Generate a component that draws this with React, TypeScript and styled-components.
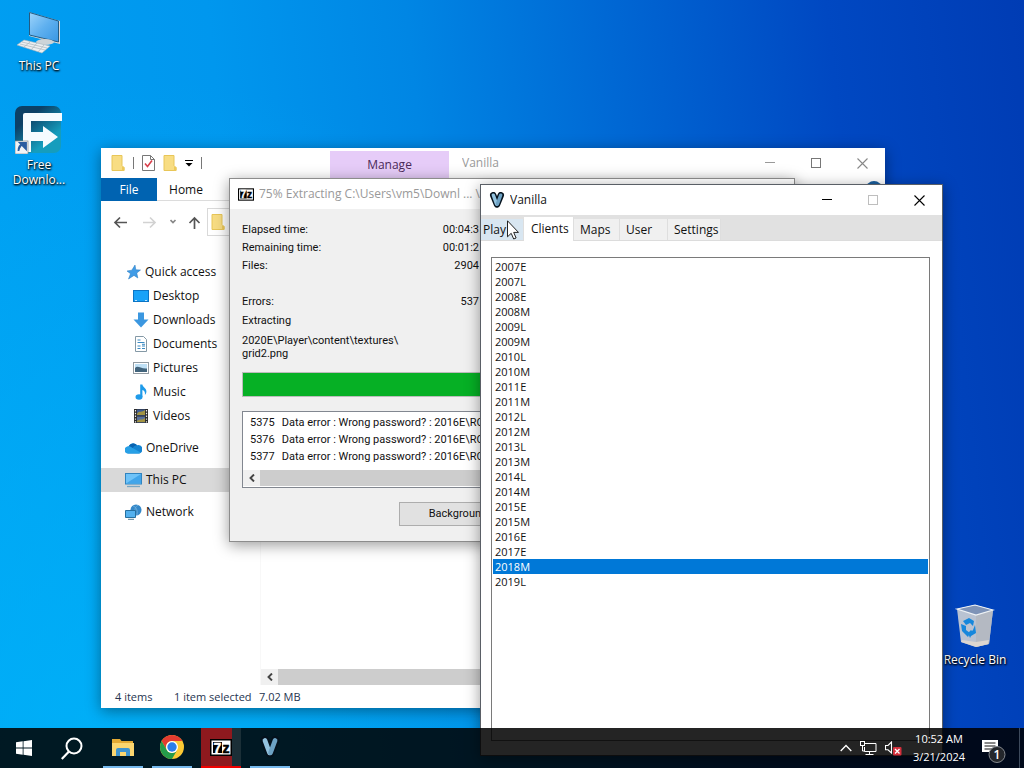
import React, { useState } from "react";
import styled, { createGlobalStyle, css } from "styled-components";

const uiFont = `"Open Sans", "Noto Sans", sans-serif`;
const dialogFont = `Roboto, "Liberation Sans", sans-serif`;

const GlobalStyle = createGlobalStyle`
  *, *::before, *::after { box-sizing: border-box; }
  body {
    margin: 0;
    overflow: hidden;
    font: 12px/16px ${uiFont};
    color: #111;
    cursor: default;
  }
  button { font: inherit; color: inherit; border: 0; padding: 0; margin: 0; background: none; }
  ul, dl, dd { margin: 0; padding: 0; list-style: none; }
  svg { display: block; flex: none; }
`;

const Desktop = styled.main`
  position: relative;
  min-height: 100vh;
  overflow: hidden;
  background:
    radial-gradient(ellipse 62% 90% at 12% 100%, rgba(0, 182, 250, 0.75), rgba(0, 170, 245, 0) 100%),
    linear-gradient(84deg, #00a0f2 0%, #0097ee 26%, #0086e4 44%, #0068d4 62%, #0048c2 82%, #003cb4 100%);
`;

/* Desktop shortcuts */

const Shortcut = styled.button<{ $x: number; $y: number }>`
  position: absolute;
  left: ${(p) => p.$x}px;
  top: ${(p) => p.$y}px;
  width: 76px;
  display: flex;
  flex-direction: column;
  align-items: center;
  gap: 3px;
  color: #fff;
  line-height: 15px;
  text-shadow: 0 1px 2px #000, 1px 1px 2px #000;
`;

/* Windows */

const WindowFrame = styled.section<{ $x: number; $y: number; $w: number; $h: number; $edge?: string }>`
  position: absolute;
  left: ${(p) => p.$x}px;
  top: ${(p) => p.$y}px;
  width: ${(p) => p.$w}px;
  height: ${(p) => p.$h}px;
  display: flex;
  flex-direction: column;
  background: #fff;
  border: ${(p) => (p.$edge ? `1px solid ${p.$edge}` : "0")};
  box-shadow: 0 3px 14px rgba(0, 0, 0, 0.4);
`;

const TitleBar = styled.header<{ $inactive?: boolean }>`
  flex: none;
  display: flex;
  align-items: center;
  height: 30px;
  color: ${(p) => (p.$inactive ? "#999" : "#111")};
`;

const TitleText = styled.h1`
  margin: 0;
  flex: 1;
  font-size: inherit;
  font-weight: 400;
  white-space: nowrap;
  overflow: hidden;
`;

const Caption = styled.button<{ $dim?: boolean }>`
  width: 46px;
  height: 28px;
  display: grid;
  place-items: center;
  opacity: ${(p) => (p.$dim ? 0.25 : 1)};
`;

const CaptionGroup = styled.div`
  display: flex;
`;

/* Explorer */

const QuickTools = styled.div`
  width: 229px;
  height: 100%;
  padding-left: 10px;
  display: flex;
  align-items: center;
  gap: 8px;
`;

const Divider = styled.span`
  width: 1px;
  height: 12px;
  background: #777;
`;

const ContextTab = styled.button`
  align-self: flex-end;
  width: 119px;
  height: 27px;
  margin-right: 13px;
  background: #e6ccf8;
  color: #4a2a58;
`;

const Ribbon = styled.nav`
  flex: none;
  display: flex;
  height: 23px;
  padding-right: 3px;
  border-bottom: 1px solid #dcdcdc;
`;

const RibbonTab = styled.button<{ $file?: boolean }>`
  width: ${(p) => (p.$file ? 56 : 58)}px;
  height: 23px;
  ${(p) => p.$file && css`background: #0063b1; color: #fff;`}
`;

const HelpButton = styled.button`
  width: 16px;
  height: 16px;
  margin: 3px 0 0 auto;
  border-radius: 50%;
  background: #1a5f9e;
  color: #fff;
`;

const AddressRow = styled.div`
  flex: none;
  display: flex;
  align-items: center;
  height: 42px;
  padding-left: 12px;
`;

const NavButton = styled.button<{ $w: number }>`
  width: ${(p) => p.$w}px;
  height: 24px;
  display: flex;
  align-items: center;
`;

const AddressBox = styled.div`
  flex: 1;
  height: 28px;
  margin: 0 12px 0 0;
  padding-left: 3px;
  display: flex;
  align-items: center;
  border: 1px solid #d9d9d9;
`;

const ExplorerBody = styled.div`
  flex: 1;
  display: flex;
  min-height: 0;
`;

const Sidebar = styled.ul`
  width: 160px;
  padding-top: 17px;
  border-right: 1px solid #f8f8f8;
`;

const SideItem = styled.li<{ $child?: boolean; $gap?: boolean; $current?: boolean }>`
  margin-top: ${(p) => (p.$gap ? 8 : 0)}px;
  background: ${(p) => (p.$current ? "#d9d9d9" : "transparent")};
  button {
    height: 24px;
    width: 100%;
    padding-left: ${(p) => (p.$child ? 32 : 24)}px;
    display: flex;
    align-items: center;
    gap: 4px;
  }
`;

const FilePane = styled.div`
  flex: 1;
  display: flex;
  flex-direction: column;
  justify-content: flex-end;
`;

const ScrollTrack = styled.div`
  display: flex;
  height: 16px;
  background: #f0f0f0;
`;

const ScrollArrow = styled.button`
  width: 17px;
  display: grid;
  place-items: center;
`;

const ScrollThumb = styled.span`
  flex: 1;
  background: #cdcdcd;
`;

const StatusBar = styled.footer`
  flex: none;
  display: flex;
  align-items: center;
  height: 23px;
  padding-left: 14px;
  font-size: 11px;
  color: #26344f;
`;

const StatusCell = styled.span<{ $w?: number }>`
  width: ${(p) => (p.$w ? `${p.$w}px` : "auto")};
  white-space: nowrap;
`;

/* Extraction dialog */

const DialogTitle = styled(TitleBar)`
  padding-left: 8px;
  gap: 5px;
`;

const DialogBody = styled.div`
  flex: 1;
  padding: 12px 12px 0;
  background: #f0f0f0;
  font: 11px/18px ${dialogFont};
  color: #111;
`;

const Stats = styled.dl`
  width: 237px;
  div {
    display: flex;
    justify-content: space-between;
    height: 18px;
  }
  div:last-child { margin-top: 18px; }
`;

const CurrentFile = styled.p`
  margin: 4px 0 12px;
  line-height: 13px;
`;

const Stage = styled.p`
  margin: 1px 0 0;
`;

const Progress = styled.div`
  height: 25px;
  border: 1px solid #bcbcbc;
  background: #e6e6e6;
`;

const ProgressFill = styled.div`
  height: 100%;
  background: #06b025;
`;

const ErrorBox = styled.div`
  margin-top: 14px;
  padding-bottom: 1px;
  border: 1px solid #828790;
  background: #fff;
`;

const ErrorTable = styled.table`
  margin: 2px 0 5px 7px;
  border-collapse: collapse;
  line-height: 17px;
  td { padding: 0 7px 0 0; height: 17px; white-space: nowrap; }
`;

const PushButton = styled.button`
  width: 118px;
  height: 24px;
  margin: 14px 0 0 157px;
  background: #e1e1e1;
  border: 1px solid #adadad;
`;

/* Vanilla launcher */

const TabStrip = styled.div`
  flex: none;
  display: flex;
  align-items: flex-end;
  height: 26px;
  background: #e1e1e1;
  border-bottom: 1px solid #dcdcdc;
`;

const Tab = styled.button<{ $w: number; $state?: "hot" | "active" }>`
  width: ${(p) => p.$w}px;
  height: 21px;
  padding-left: 6px;
  text-align: left;
  background: #f0f0f0;
  border-right: 1px solid #dedede;
  ${(p) => p.$state === "hot" && css`padding-left: 2px; background: #d8e6f1;`}
  ${(p) =>
    p.$state === "active" &&
    css`height: 24px; margin-bottom: -1px; padding: 0 0 1px 7px; background: #fff;`}
`;

const LauncherBody = styled.div`
  flex: 1;
  display: flex;
  padding: 16px 12px 14px 10px;
`;

const ListBox = styled.ul`
  flex: 1;
  padding: 1px;
  border: 1px solid #7a7a7a;
  font-size: 11px;
  line-height: 15px;
`;

const Option = styled.li<{ $selected: boolean }>`
  padding-left: 2px;
  ${(p) => p.$selected && css`background: #0078d7; color: #fff;`}
`;

const Pointer = styled.svg`
  position: absolute;
  left: 507px;
  top: 220px;
  pointer-events: none;
`;

/* Taskbar */

const Taskbar = styled.footer`
  position: absolute;
  left: 0;
  right: 0;
  bottom: 0;
  height: 40px;
  display: flex;
  background: rgba(0, 0, 0, 0.86);
  color: #fff;
`;

const SystemButton = styled.button`
  width: 48px;
  display: grid;
  place-items: center;
`;

const Apps = styled.div`
  display: flex;
  gap: 9px;
  margin-left: 7px;
`;

const AppButton = styled.button<{ $alert?: boolean }>`
  width: 40px;
  display: grid;
  place-items: center;
  border-bottom: 2px solid ${(p) => (p.$alert ? "#f00000" : "#76b9ed")};
  ${(p) => p.$alert && css`background: linear-gradient(to right, #8e191e 31px, #1b2f37 31px);`}
`;

const Tray = styled.div`
  display: flex;
  align-items: center;
  margin-left: auto;
  gap: 8px;
`;

const TrayButton = styled.button`
  display: grid;
  place-items: center;
`;

const Clock = styled.time`
  width: 58px;
  text-align: center;
  font-size: 11px;
  line-height: 18px;
  white-space: nowrap;
`;

const NoticeButton = styled(TrayButton)`
  width: 35px;
`;

const ShowDesktop = styled.button`
  align-self: stretch;
  width: 5px;
  border-left: 1px solid #3d4a5c;
`;

/* Drawings */

const MinIcon = ({ c = "#000" }: { c?: string }) => (
  <svg width="10" height="10"><path d="M0 4.500H10" stroke={c} /></svg>
);
const MaxIcon = ({ c = "#000" }: { c?: string }) => (
  <svg width="10" height="10"><rect x=".5" y=".5" width="9" height="9" fill="none" stroke={c} /></svg>
);
const CloseIcon = ({ c = "#000" }: { c?: string }) => (
  <svg width="11" height="11"><path d="M.5.5l10 10M10.500.5l-10 10" stroke={c} strokeWidth="1.1" /></svg>
);
const Folder = () => (
  <svg width="14" height="16">
    <path d="M1 .5h10v10l2 2v3H1z" fill="#f8dd83" stroke="#e8c658" />
    <path d="M11 15.500v-4l2.500 1v3z" fill="#edc95a" />
  </svg>
);
const CheckPage = () => (
  <svg width="13" height="16">
    <path d="M.5.5h8l4 4v11H.5z" fill="#fff" stroke="#777" />
    <path d="M8.500.5v4h4" fill="none" stroke="#777" />
    <path d="M3 8.500l2.500 3L10 5.500" fill="none" stroke="#d8404c" strokeWidth="1.600" />
  </svg>
);
const SevenZip = ({ w = 16, h = 13 }: { w?: number; h?: number }) => (
  <svg width={w} height={h} viewBox="0 0 22 17">
    <rect width="22" height="17" fill="#000" />
    <rect x="1.500" y="1.500" width="19" height="14" fill="#fff" />
    <rect x="3" y="3" width="9" height="11" fill="#000" />
    <text x="3.500" y="13.500" fontFamily="Liberation Sans, sans-serif" fontWeight="700" fontSize="14" fill="#fff" stroke="#fff" strokeWidth=".4">7</text>
    <text x="12.500" y="14" fontFamily="Liberation Sans, sans-serif" fontWeight="700" fontSize="14" fill="#000" stroke="#000" strokeWidth=".6">z</text>
  </svg>
);
const VanillaLogo = ({ w = 16, h = 16 }: { w?: number; h?: number }) => (
  <svg width={w} height={h} viewBox="0 0 14 16">
    <path d="M3.200 3.200L7 12.500 10.800 3.200" fill="none" stroke="#04111c" strokeWidth="6.400" strokeLinejoin="round" strokeLinecap="round" />
    <path d="M3.300 3.200L6.600 12.200" fill="none" stroke="#93c3df" strokeWidth="3.400" strokeLinecap="round" />
    <path d="M10.700 3.200L7.400 12.200" fill="none" stroke="#6da2c4" strokeWidth="3.400" strokeLinecap="round" />
  </svg>
);
const Arrow = ({ d, w, c = "#555" }: { d: string; w: number; c?: string }) => (
  <svg width={w} height="13"><path d={d} fill="none" stroke={c} strokeWidth="1.700" /></svg>
);
const LeftChevron = () => (
  <svg width="6" height="8"><path d="M5 .5L1.500 4 5 7.500" fill="none" stroke="#444" strokeWidth="1.900" /></svg>
);

const StarIcon = () => (
  <svg width="16" height="16">
    <path d="M10 1l.8 4.800L15.500 6l-3.700 3 1 5-3.800-2.600L3.500 15l2-5.300L2 7l4.800-.8z" fill="#3f9be6" stroke="#2277bf" strokeWidth=".5" />
  </svg>
);
const ScreenIcon = () => (
  <svg width="16" height="16"><rect x=".5" y="2.500" width="15" height="11" fill="#18a2f8" stroke="#0b74c4" /><path d="M2 12.500h2M12 12.500h2" stroke="#bfe5ff" /></svg>
);
const DownIcon = () => (
  <svg width="16" height="16"><path d="M5 .5h6v7h4.500L8 15.500.5 7.500H5z" fill="#3b97e0" /></svg>
);
const DocIcon = () => (
  <svg width="16" height="16">
    <path d="M2.500.5h8l3 3v12h-11z" fill="#fff" stroke="#8499a6" />
    <path d="M4.500 4h3M4.500 6.500h7M4.500 10h3M9 10h3M4.500 12.500h3M9 12.500h3M9 8.300h3" stroke="#3b8ac2" />
  </svg>
);
const PictureIcon = () => (
  <svg width="16" height="16">
    <rect x=".5" y="2.500" width="15" height="11" fill="#fff" stroke="#929ba2" />
    <rect x="2" y="4" width="12" height="8" fill="#bfe0f5" />
    <path d="M2 8c3-3 5 1 12 .5V12H2z" fill="#42647c" />
  </svg>
);
const MusicIcon = () => (
  <svg width="16" height="16">
    <ellipse cx="6" cy="13" rx="3.500" ry="2.700" fill="#1e9bea" />
    <path d="M7.200.5h2.200c.3 3 4 3.500 4 7 0 1.500-.7 2.500-1.500 3.500.5-3-.8-4.500-2.500-5V13H7.200z" fill="#1e9bea" />
  </svg>
);
const VideoIcon = () => (
  <svg width="16" height="16">
    <rect x="1" y="1" width="14" height="14" fill="#2b2b2b" />
    <rect x="4" y="1.500" width="8" height="6" fill="#3c5a94" /><rect x="4" y="8.500" width="8" height="6" fill="#58709c" />
    <path d="M4 6c2-4 5-1 8-4v5H4zM4 13c3-3 5 0 8-3v4H4z" fill="#a29443" />
    <path d="M2.500 2v13M13.500 2v13" stroke="#eee" strokeWidth="1.200" strokeDasharray="1.400 1.400" />
  </svg>
);
const CloudIcon = () => (
  <svg width="17" height="16">
    <path d="M3.500 13.500a3.500 3.500 0 010-7 5 5 0 018.500-1.300 4 4 0 012.500 8.300z" fill="#1484d2" />
    <path d="M3.500 13.500a3.500 3.500 0 01-.4-7c1.500-.2 2.500.3 4 1.200l8.500 4.900-1.500.9z" fill="#28a0e6" />
    <path d="M4 5.800a5 5 0 018-.6c-2 0-3 1-4.200 2.800C6.500 7 5.500 6.300 4 5.800z" fill="#0a63b0" />
  </svg>
);
const PcIcon = () => (
  <svg width="17" height="16">
    <rect x=".5" y="1.500" width="16" height="10.500" fill="#6fc3f8" stroke="#3184bf" />
    <path d="M1 11.500L16 2v9.500z" fill="#41a5ea" /><path d="M2 14.500h13" stroke="#76a6c4" strokeWidth="1.300" />
  </svg>
);
const NetworkIcon = () => (
  <svg width="17" height="16">
    <circle cx="11" cy="6" r="5.500" fill="#3488c9" /><path d="M8 2c3 1 5 4 4 9M13 1c-3 2-4 5-2 9" fill="none" stroke="#7db8e0" strokeWidth=".7" />
    <path d="M.5 6.500h10v7H.5z" fill="#53b1ef" stroke="#266f9f" /><path d="M3 15.300h6" stroke="#548098" />
  </svg>
);

const BigPc = () => (
  <svg width="44" height="44">
    <defs><linearGradient id="screen" x2="1" y2="1"><stop stopColor="#9ed4fb" /><stop offset=".5" stopColor="#5fb0ef" /><stop offset="1" stopColor="#3897e4" /></linearGradient></defs>
    <path d="M12 1l31 9v23l-31-8z" fill="#d8dadb" /><path d="M12.500 1.500l29 8.500v21l-29-7z" fill="url(#screen)" stroke="#225b83" />
    <path d="M24 27l7 2v3l-7-2z" fill="#9ba6ad" /><ellipse cx="28" cy="31" rx="9" ry="3" fill="#cdd4d8" />
    <path d="M7 29l26 6-8 7L0 34z" fill="#eceff1" stroke="#aab4bb" strokeWidth=".6" />
    <path d="M5 31l25 6M3 33l25 6M13 31l-6 5M20 32l-6 7M27 34l-6 7" stroke="#aab4bb" strokeWidth=".7" />
  </svg>
);
const FdmLogo = () => (
  <svg width="48" height="48">
    <defs><linearGradient id="fdm" x2=".8" y2="1"><stop offset=".3" stopColor="#0c4066" /><stop offset=".8" stopColor="#159dbd" /></linearGradient></defs>
    <rect width="46" height="47" rx="7" fill="url(#fdm)" />
    <path d="M8 46V9q0-2 2-2h37v8H16v11h12v-6l15 11-15 11v-7H16v11z" fill="#f5fbff" />
    <rect x="0" y="35" width="13" height="13" fill="#f1f4f7" stroke="#888" strokeWidth=".7" />
    <path d="M3.500 45c0-4 1-6 4-6.500M5 37h6v6z" fill="#2b5c9f" stroke="#2b5c9f" strokeWidth="1.800" />
  </svg>
);
const BinIcon = () => (
  <svg width="40" height="46">
    <path d="M2 6l18-4 18 5-4 34-13 3L6 39z" fill="#c7ccd3" fillOpacity=".93" />
    <path d="M21 12l17-5-4 34-13 3z" fill="#b4b9c2" />
    <path d="M2 6l18-4 18 5-17 5z" fill="#7e93b7" stroke="#eef2f5" strokeWidth="1.200" />
    <path d="M7 37l14 2 13-2-1 4-12 3-15-5z" fill="#dcd6d0" />
    <g fill="#1687dc">
      <path d="M8 18l6-3 5 3-1 5-3-3-4 2z" /><path d="M6 21l5 2v4l4 3-2 4-6-6z" /><path d="M20 22l1 8-5 3-1 2-2-5 3-3 1 1 1-1z" />
    </g>
  </svg>
);

const WinLogo = () => (
  <svg width="16" height="16"><path d="M0 2.300L6.700 1.300V7.600H0zM7.500 1.200L16 0v7.600H7.500zM0 8.400h6.700v6.300L0 13.700zM7.500 8.400H16V16l-8.500-1.200z" fill="#fff" /></svg>
);
const SearchIcon = () => (
  <svg width="22" height="23"><circle cx="13" cy="9" r="7.500" fill="none" stroke="#fff" strokeWidth="2" /><path d="M8 14.500L.8 22" stroke="#fff" strokeWidth="2.200" /></svg>
);
const TaskFolder = () => (
  <svg width="22" height="19">
    <path d="M0 1h8l1.500 2H21v15H0z" fill="#e3aa34" /><path d="M0 5h22v13H0z" fill="#fbd66f" />
    <path d="M4 18v-6q0-2 2-2h10q2 0 2 2v6h-4v-4H8v4z" fill="#3f94cf" />
  </svg>
);
const ChromeLogo = () => (
  <svg width="24" height="24" viewBox="0 0 24 24">
    <circle cx="12" cy="12" r="12" fill="#fcc934" />
    <path d="M1.610 6A12 12 0 0122.390 6H12a6 6 0 00-5.200 9z" fill="#e23b30" />
    <path d="M1.610 6A12 12 0 0012 24l5.200-9A6 6 0 016.800 15z" fill="#249b4a" />
    <circle cx="12" cy="12" r="6" fill="#fff" /><circle cx="12" cy="12" r="4.700" fill="#2b7de9" />
  </svg>
);
const UpChevron = () => (
  <svg width="12" height="8"><path d="M.7 7L6 1.500 11.300 7" fill="none" stroke="#fff" strokeWidth="1.300" /></svg>
);
const TrayNetwork = () => (
  <svg width="17" height="14">
    <path d="M5 2.500h11v8H4.500V6M9.500 10.500v3M5.500 13.500h8" fill="none" stroke="#fff" />
    <rect x=".5" y=".5" width="4" height="4" fill="#222" stroke="#fff" /><path d="M2.500 4.500V10h2" fill="none" stroke="#fff" />
  </svg>
);
const TraySpeaker = () => (
  <svg width="17" height="15">
    <path d="M.5 4.500H3l3.500-3.500v11L3 8.800H.5z" fill="none" stroke="#fff" strokeWidth="1.100" />
    <rect x="8" y="6" width="8.500" height="8.500" rx="1" fill="#d42f3c" /><path d="M10 8l4.500 4.500M14.500 8L10 12.500" stroke="#fff" strokeWidth="1.300" />
  </svg>
);
const NoticeIcon = () => (
  <svg width="26" height="30">
    <path d="M1 7h16v12h-4v4l-4-4H1z" fill="#fff" /><path d="M3.500 10h11M3.500 13h11M3.500 16h8" stroke="#111" />
    <circle cx="16" cy="21.500" r="8" fill="#24272c" stroke="#85898f" />
    <text x="16" y="26" textAnchor="middle" fontSize="12" fontWeight="600" fontFamily="Open Sans, sans-serif" fill="#fff">1</text>
  </svg>
);

/* Data */

const places = [
  { label: "Quick access", icon: <StarIcon /> },
  { label: "Desktop", icon: <ScreenIcon />, child: true },
  { label: "Downloads", icon: <DownIcon />, child: true },
  { label: "Documents", icon: <DocIcon />, child: true },
  { label: "Pictures", icon: <PictureIcon />, child: true },
  { label: "Music", icon: <MusicIcon />, child: true },
  { label: "Videos", icon: <VideoIcon />, child: true },
  { label: "OneDrive", icon: <CloudIcon />, gap: true },
  { label: "This PC", icon: <PcIcon />, gap: true, current: true },
  { label: "Network", icon: <NetworkIcon />, gap: true },
];

const stats = [
  ["Elapsed time:", "00:04:3"],
  ["Remaining time:", "00:01:2"],
  ["Files:", "2904"],
  ["Errors:", "537"],
];

const clients = [
  "2007E", "2007L", "2008E", "2008M", "2009L", "2009M", "2010L", "2010M", "2011E", "2011M", "2012L",
  "2012M", "2013L", "2013M", "2014L", "2014M", "2015E", "2015M", "2016E", "2017E", "2018M", "2019L",
];

const Explorer = () => (
  <WindowFrame $x={101} $y={148} $w={784} $h={560} aria-label="Explorer">
    <TitleBar $inactive>
      <QuickTools>
        <Folder /><Divider /><CheckPage /><Folder />
        <svg width="8" height="8"><path d="M0 1.500h8" stroke="#000" /><path d="M.5 4h7L4 7.500z" /></svg>
        <Divider />
      </QuickTools>
      <ContextTab>Manage</ContextTab>
      <TitleText>Vanilla</TitleText>
      <Caption aria-label="Minimize"><MinIcon c="#999" /></Caption>
      <Caption aria-label="Maximize"><MaxIcon c="#777" /></Caption>
      <Caption aria-label="Close"><CloseIcon c="#888" /></Caption>
    </TitleBar>
    <Ribbon>
      <RibbonTab $file>File</RibbonTab>
      <RibbonTab>Home</RibbonTab>
      <HelpButton aria-label="Help" />
    </Ribbon>
    <AddressRow>
      <NavButton $w={30} aria-label="Back"><Arrow w={14} d="M14 6.500H2M7 1.500l-5 5 5 5" /></NavButton>
      <NavButton $w={27} aria-label="Forward"><Arrow w={14} c="#d2d2d2" d="M0 6.500h12M7 1.500l5 5-5 5" /></NavButton>
      <NavButton $w={18} aria-label="Recent"><Arrow w={7} c="#888" d="M.5 4l2.500 2.500L5.500 4" /></NavButton>
      <NavButton $w={19} aria-label="Up"><Arrow w={13} d="M6.500 13V2M1.500 7l5-5 5 5" /></NavButton>
      <AddressBox><Folder /></AddressBox>
    </AddressRow>
    <ExplorerBody>
      <Sidebar>
        {places.map((p) => (
          <SideItem key={p.label} $child={p.child} $gap={p.gap} $current={p.current}>
            <button>{p.icon}{p.label}</button>
          </SideItem>
        ))}
      </Sidebar>
      <FilePane>
        <ScrollTrack>
          <ScrollArrow aria-label="Scroll left"><LeftChevron /></ScrollArrow>
          <ScrollThumb />
        </ScrollTrack>
      </FilePane>
    </ExplorerBody>
    <StatusBar>
      <StatusCell $w={59}>4 items</StatusCell>
      <StatusCell $w={85}>1 item selected</StatusCell>
      <StatusCell>7.02 MB</StatusCell>
    </StatusBar>
  </WindowFrame>
);

const ExtractDialog = () => (
  <WindowFrame $x={229} $y={178} $w={566} $h={364} $edge="#8c8c8c" aria-label="Extracting">
    <DialogTitle $inactive>
      <SevenZip />
      <TitleText>75% Extracting C:\Users\vm5\Downl ... \cl</TitleText>
    </DialogTitle>
    <DialogBody>
      <Stats>
        {stats.map(([name, value]) => (
          <div key={name}><dt>{name}</dt><dd>{value}</dd></div>
        ))}
      </Stats>
      <Stage>Extracting</Stage>
      <CurrentFile>2020E\Player\content\textures\<br />grid2.png</CurrentFile>
      <Progress role="progressbar" aria-valuenow={75}><ProgressFill style={{ width: "75%" }} /></Progress>
      <ErrorBox>
        <ErrorTable>
          <tbody>
            {[5375, 5376, 5377].map((n) => (
              <tr key={n}><td>{n}</td><td>Data error : Wrong password? : 2016E\RO</td></tr>
            ))}
          </tbody>
        </ErrorTable>
        <ScrollTrack>
          <ScrollArrow aria-label="Scroll left"><LeftChevron /></ScrollArrow>
          <ScrollThumb />
        </ScrollTrack>
      </ErrorBox>
      <PushButton>Background</PushButton>
    </DialogBody>
  </WindowFrame>
);

const Launcher = () => {
  const [client, setClient] = useState("2018M");
  return (
    <WindowFrame $x={480} $y={184} $w={463} $h={572} $edge="#5a5f66" aria-label="Vanilla">
      <DialogTitle>
        <VanillaLogo />
        <TitleText>Vanilla</TitleText>
        <CaptionGroup>
          <Caption aria-label="Minimize"><MinIcon /></Caption>
          <Caption $dim aria-label="Maximize" disabled><MaxIcon /></Caption>
          <Caption aria-label="Close"><CloseIcon /></Caption>
        </CaptionGroup>
      </DialogTitle>
      <TabStrip role="tablist">
        <Tab role="tab" $w={43} $state="hot">Play</Tab>
        <Tab role="tab" $w={50} $state="active" aria-selected>Clients</Tab>
        <Tab role="tab" $w={46}>Maps</Tab>
        <Tab role="tab" $w={48}>User</Tab>
        <Tab role="tab" $w={53}>Settings</Tab>
      </TabStrip>
      <LauncherBody>
        <ListBox role="listbox" aria-label="Clients">
          {clients.map((c) => (
            <Option key={c} role="option" aria-selected={c === client} $selected={c === client} onClick={() => setClient(c)}>
              {c}
            </Option>
          ))}
        </ListBox>
      </LauncherBody>
    </WindowFrame>
  );
};

export default function App() {
  return (
    <Desktop>
      <GlobalStyle />
      <Shortcut $x={1} $y={11}><BigPc />This PC</Shortcut>
      <Shortcut $x={1} $y={106}><FdmLogo /><span>Free<br />Downlo...</span></Shortcut>
      <Shortcut $x={937} $y={603}><BinIcon />Recycle Bin</Shortcut>
      <Explorer />
      <ExtractDialog />
      <Launcher />
      <Taskbar>
        <SystemButton aria-label="Start"><WinLogo /></SystemButton>
        <SystemButton aria-label="Search"><SearchIcon /></SystemButton>
        <Apps>
          <AppButton aria-label="File Explorer"><TaskFolder /></AppButton>
          <AppButton aria-label="Chrome"><ChromeLogo /></AppButton>
          <AppButton $alert aria-label="7-Zip"><SevenZip w={22} h={17} /></AppButton>
          <AppButton aria-label="Vanilla"><VanillaLogo w={20} h={22} /></AppButton>
        </Apps>
        <Tray>
          <TrayButton aria-label="Show hidden icons"><UpChevron /></TrayButton>
          <TrayButton aria-label="Network"><TrayNetwork /></TrayButton>
          <TrayButton aria-label="Volume"><TraySpeaker /></TrayButton>
          <Clock>10:52 AM<br />3/21/2024</Clock>
          <NoticeButton aria-label="Notifications"><NoticeIcon /></NoticeButton>
          <ShowDesktop aria-label="Show desktop" />
        </Tray>
      </Taskbar>
      <Pointer width="12" height="20" viewBox="0 0 12 20">
        <path d="M.5.8v16l3.700-3.500 2.500 5.700 2.400-1-2.400-5.600h4.800z" fill="#fff" stroke="#222" />
      </Pointer>
    </Desktop>
  );
}
